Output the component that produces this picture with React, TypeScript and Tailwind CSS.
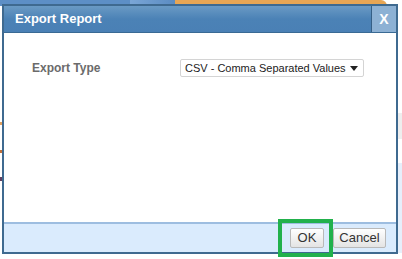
import React from "react";

export default function App() {
  return (
    <div
      className="relative w-[402px] h-[259px] bg-white overflow-hidden"
      style={{ fontFamily: '"Liberation Sans", Arial, sans-serif' }}
    >
      {/* background page bits */}
      <div className="absolute left-0 top-0 w-[402px] h-[6px] flex">
        <div className="w-[130px] h-full bg-[#5d8fc6]" />
        <div className="w-[45px] h-full bg-gradient-to-r from-[#7aa6d6] to-[#5b8cc2]" />
        <div className="w-[212px] h-full bg-[#e8a654] rounded-tr-[6px]" />
        <div className="flex-1 h-full bg-white" />
      </div>
      <div className="absolute right-0 top-[113px] w-[4px] h-[26px] bg-[#eeeeee]" />
      <div className="absolute right-0 top-[163px] w-[4px] h-[90px] bg-[#e6effb]" />
      <div className="absolute left-0 top-[122px] w-[2px] h-[3px] bg-[#e0a060]" />
      <div className="absolute left-0 top-[150px] w-[2px] h-[3px] bg-[#c0703a]" />
      <div className="absolute left-0 top-[177px] w-[2px] h-[4px] bg-[#604060]" />

      {/* dialog */}
      <div className="absolute left-[2px] top-[4px] w-[396px] h-[250px] border-2 border-[#3f6a90] bg-white flex flex-col">
        <div className="h-[27px] flex border-b border-[#3a6a94] bg-gradient-to-b from-[#6a9ac4] via-[#4b82b6] to-[#4a80b5]">
          <div className="flex-1 flex items-center pl-[11px] text-white font-bold text-[13px]">
            Export Report
          </div>
          <div className="w-[25px] border-l border-[#355f86] bg-[#8db1d4] flex items-center justify-center text-white font-bold text-[14px]">
            X
          </div>
        </div>
        <div className="flex-1 bg-white relative">
          <div className="flex items-center pt-[26px] pl-[28px]">
            <div className="w-[148px] text-[12px] font-bold text-[#6b6b6b] whitespace-nowrap">Export Type</div>
            <div className="w-[184px] h-[18px] border border-[#d4d4d4] rounded-[2px] flex items-center pl-[4px] pr-[5px] text-[11px] text-[#222] whitespace-nowrap">
              <span className="flex-1">CSV - Comma Separated Values</span>
              <svg width="8" height="5" viewBox="0 0 8 5" className="shrink-0">
                <path d="M0 0 L8 0 L4 5 Z" fill="#222" />
              </svg>
            </div>
          </div>
        </div>
        <div className="h-[30px] border-t-2 border-[#9dbde0] bg-[#daebfd] flex items-center justify-end pr-[10px] gap-[9px]">
          <button className="w-[34px] h-[20px] border border-[#b9b9b9] rounded-[2px] bg-gradient-to-b from-white to-[#e4e4e4] text-[13px] text-[#333] flex items-center justify-center">
            OK
          </button>
          <button className="w-[53px] h-[20px] border border-[#b9b9b9] rounded-[2px] bg-gradient-to-b from-white to-[#e4e4e4] text-[13px] text-[#333] flex items-center justify-center">
            Cancel
          </button>
        </div>
      </div>

      {/* highlight */}
      <div className="absolute left-[278px] top-[219px] w-[55px] h-[38px] border-[4px] border-[#22b14c]" />
    </div>
  );
}
